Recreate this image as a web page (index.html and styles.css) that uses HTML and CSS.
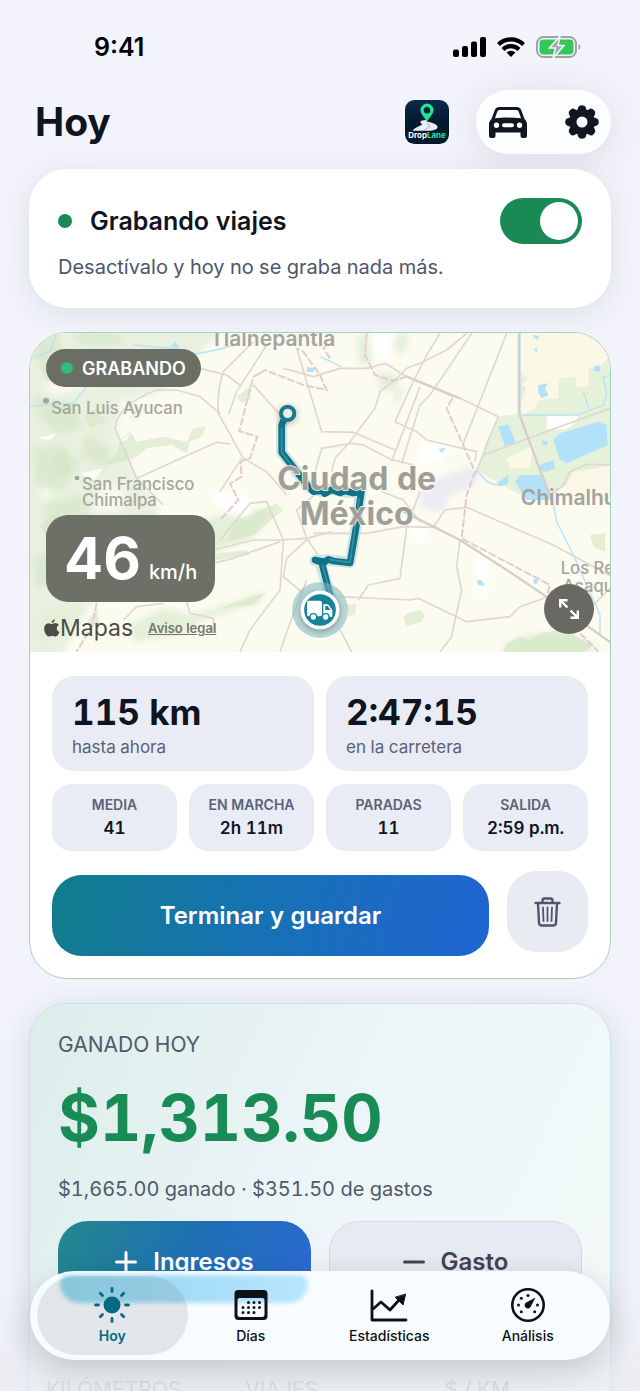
FILE: index.html
```html
<!DOCTYPE html>
<html lang="es">
<head>
<meta charset="utf-8">
<meta name="viewport" content="width=device-width, initial-scale=1">
<title>DropLane – Hoy</title>
<link rel="stylesheet" href="styles.css">
</head>
<body>
<div class="app">
  <div class="status">
    <span class="status-time">9:41</span>
    <span class="status-icons">
      <svg width="33" height="20" viewBox="0 0 33 20" fill="#000" aria-hidden="true"><rect x="0" y="12.500" width="6" height="7.500" rx="2"/><rect x="9" y="9" width="6" height="11" rx="2"/><rect x="18" y="4.500" width="6" height="15.500" rx="2"/><rect x="27" y="0" width="6" height="20" rx="2"/></svg>
      <svg width="28" height="20" viewBox="0 0 28 20" aria-hidden="true"><g fill="none" stroke="#000" stroke-width="4.200"><path d="M1.500 7.600a17.700 17.700 0 0 1 25 0"/><path d="M6 12.400a11.300 11.300 0 0 1 16 0"/></g><path d="M9.600 15.600a6.400 6.400 0 0 1 8.800 0L14 20z"/></svg>
      <svg width="45" height="22" viewBox="0 0 45 22" aria-hidden="true"><rect x="1" y="1" width="39" height="20" rx="6.500" fill="none" stroke="#a0a3a6" stroke-width="2"/><rect x="3.500" y="3.500" width="34" height="15" rx="4" fill="#34c759"/><path d="M42.500 8v6q2-1 2-3t-2-3z" fill="#a0a3a6"/><path d="M24 0 13.500 12h6L17 22 28 9.500h-6z" fill="#a4a9ac" stroke="#f3f3fb" stroke-width="1.600"/></svg>
    </span>
  </div>

  <header class="header">
    <h1 class="title">Hoy</h1>
    <svg class="logo" viewBox="0 0 44 44" role="img" aria-label="DropLane">
      <defs><linearGradient id="lg" x1="0" y1="0" x2="0" y2="1"><stop offset="0" stop-color="#0b2b4b"/><stop offset=".5" stop-color="#041a30"/><stop offset="1" stop-color="#03192b"/></linearGradient></defs>
      <rect width="44" height="44" rx="9.500" fill="url(#lg)"/>
      <path d="M22 21.500C18 15.500 15.500 13.500 15.500 10a6.500 6.500 0 0 1 13 0c0 3.500-2.500 5.500-6.500 11.500z" fill="#1fe29b"/>
      <circle cx="22" cy="10.300" r="3.200" fill="#07223a"/>
      <path d="M17 20.500l4-.5c1 1.500 1.500 2 3 2 6 1.500 9 3.500 8.500 5.500-.6 2.200-4.500 3-9 3.300H7.500c1.500-2.500 5-4 8.500-5.500 1.500-.7 1-1.300 0-2-1-1-1-2 1-2.800z" fill="#e9edf4"/>
      <path d="M21.500 23l3 2-1 2.600-6 3.400" fill="none" stroke="#9ba8ba" stroke-width=".8"/>
      <text x="22" y="38" text-anchor="middle" class="logo-text" fill="#fff">Drop<tspan fill="#1fe2a5">Lane</tspan></text>
    </svg>
    <div class="header-pill">
      <button class="icon-btn" type="button" aria-label="Vehículo">
        <svg width="38" height="31" viewBox="0 0 38 31" aria-hidden="true"><path fill="#111620" fill-rule="evenodd" d="M10.500 0h17c2.300 0 4 1 4.800 3.200L35.500 12c1.700 1.500 2.500 3 2.500 5.500v11.500a2 2 0 0 1-2 2h-2.500a2 2 0 0 1-2-2v-3.500h-25V29a2 2 0 0 1-2 2H2a2 2 0 0 1-2-2V17.500C0 15 .8 13.500 2.500 12l3.200-8.800C6.500 1 8.200 0 10.500 0zm.5 2.900c-1.300 0-2.200.6-2.700 1.800L5.900 11.300c8-1 18-1 26.200 0L29.700 4.700c-.5-1.200-1.400-1.800-2.700-1.800zM7.500 15.500a2.700 2.700 0 1 0 0 5.400 2.700 2.700 0 0 0 0-5.400zm23 0a2.700 2.700 0 1 0 0 5.400 2.700 2.700 0 0 0 0-5.400zM15 16.300a2 2 0 0 0 0 4h8a2 2 0 0 0 0-4z"/></svg>
      </button>
      <button class="icon-btn" type="button" aria-label="Ajustes">
        <svg width="34" height="34" viewBox="-17 -17 34 34" aria-hidden="true"><g fill="#111620"><g id="teeth"><path id="t" d="M-5-10.500-3.600-15Q-3-16.800 0-16.800T3.600-15L5-10.500z"/><use href="#t" transform="rotate(45)"/><use href="#t" transform="rotate(90)"/><use href="#t" transform="rotate(135)"/></g><use href="#teeth" transform="rotate(180)"/></g><circle r="9.200" fill="none" stroke="#111620" stroke-width="7.400"/></svg>
      </button>
    </div>
  </header>

  <main class="content">
    <section class="card record">
      <div class="record-row">
        <span class="record-dot"></span>
        <label class="record-label" for="rec">Grabando viajes</label>
        <input class="switch" id="rec" type="checkbox" role="switch" checked>
      </div>
      <p class="record-note">Desactívalo y hoy no se graba nada más.</p>
    </section>

    <section class="card trip">
      <div class="map">
        <svg class="map-art" viewBox="30 24 1740 957" preserveAspectRatio="xMidYMid slice" role="img" aria-label="Mapa de Ciudad de México con la ruta">
          <defs>
            <filter id="soft" x="-10%" y="-10%" width="120%" height="120%"><feGaussianBlur stdDeviation="10"/></filter>
            <filter id="shade" x="-50%" y="-50%" width="200%" height="200%"><feGaussianBlur stdDeviation="9"/></filter>
          </defs>
          <rect x="0" y="0" width="1800" height="1000" fill="#fcfbf0"/>
          <g filter="url(#soft)">
            <path fill="#e8f1df" d="M0 0H640L560 60 500 130 420 200 300 230 290 320 350 460 420 560 300 700 210 840 120 1000H0z"/>
            <path fill="#dae9cf" d="M30 40 110 20 130 90 60 130zM40 210 160 240 190 300 120 330 60 280zM40 370 130 360 180 420 120 500 50 480zM160 20 320 30 290 60 180 60zM70 540 190 510 210 600 100 640zM40 700 140 650 120 760 50 790zM230 100 300 130 260 180zM200 330 270 370 260 430 180 390z"/>
            <path fill="#fbf8ee" d="M60 180 150 160 210 180 110 215zM150 130 220 150 180 190zM250 470 320 490 300 560 220 560zM60 490 110 500 70 530zM170 620 220 600 230 680z"/>
            <path fill="#e4efd8" d="M370 700 440 620 500 600 640 560 760 550 700 640 560 690 420 740zM330 900 430 850 520 870 730 800 720 830 560 880 480 930 340 950zM330 240 380 250 340 290zM50 870 170 840 140 920 60 960zM1010 40 1040 20 1060 110 1020 120zM1100 30 1170 25 1150 90 1110 70zM1070 140 1130 150 1140 190 1080 200zM1120 200 1150 190 1130 250zM1450 960 1520 930 1640 920 1730 960 1700 990 1450 990z"/>
            <path fill="#ebebf2" d="M1230 470 1340 430 1390 440 1350 490 1250 520zM1190 500 1290 500 1270 560 1210 550z"/>
            <path fill="#fff" d="M1060 30 1130 20 1110 110 1060 100zM1200 350 1290 360 1270 410 1200 420zM560 500 680 510 700 590 620 560zM1370 680 1400 660 1400 820 1370 810zM1160 600 1220 610 1200 660z"/>
          </g>
          <g fill="#d4e7c3" opacity=".6">
            <path d="M300 345 330 320 350 350 430 335 500 350 520 310 558 305 545 335 510 350 500 385 455 360 380 370 350 395 310 410 255 420 290 385z"/>
            <path d="M650 215 695 180 690 225 665 235zM650 585 770 535 790 555 700 630 620 650zM550 690 680 675 690 690 560 710zM600 850 740 800 700 840z"/>
            <path d="M1150 880 1160 865 1200 855 1215 870 1205 890 1160 903zM980 840 1008 835 1005 870 985 872zM1710 630 1755 625 1755 680 1720 665z"/>
            <path d="M60 130 90 100 120 150 80 170zM190 270 230 250 260 290 210 310zM100 400 140 380 150 440 110 450zM60 600 110 560 130 610 80 640zM200 890 230 850 240 910zM120 700 150 660 160 720z"/>
            <path d="M1460 955 1500 935 1530 945 1560 925 1620 915 1680 940 1720 960 1690 981 1450 981z"/>
          </g>
          <path fill="#fffef9" d="M50 340 110 325 90 345zM180 445 250 430 220 465zM300 350 330 325 320 345z"/>
          <g fill="#e6f1da">
            <path d="M1435 275 1500 265 1500 140 1525 160 1505 180 1770 270V420L1690 440 1600 510H1500L1395 450 1370 430 1400 350z"/>
            <path d="M1615 160 1670 155 1670 180 1705 185 1705 130 1730 130 1775 90V290L1510 270 1545 250 1555 225 1615 220z"/>
          </g>
          <path fill="#fcf8e8" d="M1500 24H1690L1770 80 1730 130 1705 130V185H1670V155H1615V220L1555 225 1545 250 1510 270 1500 250 1525 160 1500 140zM1460 400 1540 360 1530 430 1470 430zM1660 440 1770 425V520H1620z"/>
          <path fill="#fff" d="M1580 272 1670 270 1672 285 1640 313H1580z"/>
          <g fill="#b3e1fa">
            <path d="M1600 345 1620 325 1735 290 1760 300 1763 360 1640 415 1620 405zM1435 305 1465 298 1487 350 1455 365zM1555 180 1585 175 1575 190 1585 210 1565 220 1555 205zM1485 470 1500 450 1560 450 1590 500 1600 525H1520zM1565 345 1585 350 1580 362 1565 358zM1560 420 1600 405 1605 430 1580 440 1560 435zM1430 475 1465 450 1465 475 1440 485zM1720 125 1740 120 1740 140 1722 138zM1540 30 1555 32 1555 45 1540 38zM1540 72 1553 70 1550 82zM1256 372 1278 368 1265 385zM1370 765 1385 765 1395 782 1375 780zM1540 765 1555 755 1550 778 1540 775zM450 65 480 70 465 50zM860 125 885 130 880 142 860 140z"/>
          </g>
          <g fill="none" stroke="#b6e2f6" stroke-width="4">
            <path d="M30 100 90 80 110 25M30 245 70 240 160 235 200 185 250 150M340 60 470 72 500 90Q560 85 640 60M1500 25V270L1670 270 1750 240 1760 210 1750 155 1775 150M1690 200 1707 250M1370 430Q1395 480 1440 480M1596 520 1610 590 1660 690 1740 870V930M900 95 965 125"/>
          </g>
          <g fill="none" stroke="#ddd8d2" stroke-width="5" stroke-linejoin="round">
            <path d="M700 50 610 140Q590 200 595 265L670 400 740 440 800 510M740 60 650 200 625 270M830 70 905 320 1000 322 1125 375M700 180 790 280M540 130 620 150 660 180M350 460 590 352 632 357M410 195H470L540 215 600 265M410 195Q290 240 285 310L350 460 430 540"/>
            <path d="M790 130 880 155 960 130 1040 130 1095 115 1160 155 1245 190 1320 220 1435 275 1405 345 1390 390 1365 450M1355 25 1230 210 1200 240 1145 415M1340 25 1280 75 1200 115 1160 130 1125 165 1080 200 1065 250 990 350 945 400 935 440M1260 25 1220 90 1170 190 1125 290 1190 320 1220 345 1370 380 1365 410M1200 185 1115 410M1460 25 1330 355M1770 250 1390 390M885 440 905 370 990 355 1030 360 1110 402 1180 420M1775 420 1700 418 1650 440 1630 480 1590 510"/>
            <path d="M880 625H1040L1150 605 1240 607 1275 555 1340 547 1600 660 1775 755M1160 605 1140 760 1045 780 1015 825M960 815 1170 825 1195 820 1340 890 1470 875 1500 845 1580 817 1660 875M1320 645 1310 725 1325 795 1305 885 1295 935 1260 980M1085 500 1150 525 1200 590M960 915 1000 990M1160 605 1200 500M1775 785 1720 840"/>
            <path d="M580 675 700 645H780L860 640 935 620M580 715 640 700 780 650M600 645 690 535 740 530 790 645 780 795 690 915 660 980M865 640 800 700 790 755 850 805M860 640 830 555 900 495M500 830 510 865 580 880V925M310 885 350 845 430 835M860 765 810 895 780 980M665 400 600 500M862 642 900 700"/>
          </g>
          <g fill="none" stroke="#d5cec9" stroke-width="7" stroke-linejoin="round">
            <path d="M1497 25V265L1560 435 1590 510M1150 560 1240 605 1320 645 1445 725 1580 815 1775 955M1160 155 1320 220"/>
          </g>
          <g fill="none" stroke="#e6cad2" stroke-width="6" stroke-dasharray="24 6">
            <path d="M720 145 735 135 850 180 920 195 900 150 850 80 830 70M720 145 700 155 658 318 712 335 690 400 662 410 665 455 630 475 655 525 600 585M930 100 910 70 920 60M1040 25 1035 90 1065 150 1120 168 1160 155 1245 190 1300 215 1280 250 1365 440 1340 510 1325 640 1590 780 1580 815M1680 925 1735 980M230 835 215 905 170 980"/>
          </g>

          <g fill="none" stroke-linejoin="round" stroke-linecap="round">
            <path stroke="#c5dfe2" stroke-width="34" opacity=".8" d="M800 265 785 300V382L830 440 865 485 905 500 935 492 980 502 1022 500 1008 610 990 712 925 705 885 706 900 710 935 830"/>
            <path stroke="#0f7286" stroke-width="20" d="M800 265 785 300V382L830 440 865 485 880 500 905 497 915 506 935 494 960 504 975 498 1000 504 1024 500 1008 610 990 714 940 708 925 703 915 710 885 705 905 712 935 830"/>
            <path stroke="#3292a3" stroke-width="5" d="M785 310V382L830 440M1018 520 990 712 930 704M908 722 935 820"/>
          </g>
          <g class="map-city" text-anchor="middle"><text x="1010" y="494">Ciudad de</text><text x="1010" y="600">México</text></g>
          <circle cx="803" cy="270" r="30" fill="#555" opacity=".3" filter="url(#shade)"/>
          <circle cx="803" cy="265" r="20" fill="#ededea" stroke="#187a8c" stroke-width="12"/>
          <circle cx="900" cy="855" r="84" fill="#81b8c2" opacity=".55"/>
          <circle cx="900" cy="860" r="58" fill="#444" opacity=".5" filter="url(#shade)"/>
          <circle cx="900" cy="855" r="53" fill="#148297" stroke="#fff" stroke-width="11"/>
          <g fill="#fff"><rect x="861" y="827" width="45" height="47" rx="6"/><path d="M910 838H924L937 855V875H910z"/></g>
          <path d="M916 843H923L931 855H916z" fill="#148297"/>
          <g fill="#fff" stroke="#148297" stroke-width="4"><circle cx="880" cy="876" r="10"/><circle cx="917" cy="876" r="10"/></g>

          <g class="map-town" text-anchor="middle"><text x="758" y="63">Tlalnepantla</text></g>
          <g class="map-town"><text x="1502" y="541">Chimalhuacán</text></g>
          <g class="map-place">
            <circle cx="78" cy="227" r="9"/><circle cx="171" cy="459" r="7"/>
            <text x="94" y="268">San Luis Ayucan</text>
            <text x="186" y="494">San Francisco</text><text x="186" y="544">Chimalpa</text>
            <text x="1622" y="746">Los Reyes</text><text x="1628" y="801">Acaquilpan</text>
          </g>
        </svg>
        <span class="rec-badge"><span class="rec-badge-dot"></span>GRABANDO</span>
        <div class="speed"><strong class="speed-value">46</strong><span class="speed-unit">km/h</span></div>
        <div class="map-credit">
          <span class="map-brand"><svg width="16" height="18" viewBox="0 0 16 18" fill="#4b4c47" aria-hidden="true"><path d="M10.800.2c.1 2-1.500 3.700-3.200 3.700C7.400 2 9 .4 10.800.2zM8 5c.8 0 1.700-.9 3.300-.9 1.400 0 2.700.7 3.500 1.900-3 1.800-2.500 5.900.7 7-.8 2-2 4.500-3.900 4.500-1.300 0-1.700-.8-3.300-.8s-2 .8-3.300.8C2.600 17.500.2 13.500.2 9.800.2 6.300 2.400 4.200 4.700 4.200 6.200 4.200 7.200 5 8 5z"/></svg>Mapas</span>
          <a class="map-legal" href="#legal">Aviso legal</a>
        </div>
        <button class="expand" type="button" aria-label="Ampliar mapa">
          <svg width="20" height="20" viewBox="0 0 20 20" fill="none" stroke="#fff" stroke-width="2.400" aria-hidden="true"><path d="M1.200 8.500V1.200h7.300M1.500 1.500l7 7M18.800 11.500v7.300h-7.300M18.500 18.500l-7-7"/></svg>
        </button>
      </div>

      <div class="trip-body">
        <div class="tiles tiles-2">
          <div class="tile-big"><strong class="tile-figure">115 km</strong><span class="tile-caption">hasta ahora</span></div>
          <div class="tile-big"><strong class="tile-figure">2:47:15</strong><span class="tile-caption">en la carretera</span></div>
        </div>
        <div class="tiles tiles-4">
          <div class="tile"><span class="tile-name">MEDIA</span><strong class="tile-value">41</strong></div>
          <div class="tile"><span class="tile-name">EN MARCHA</span><strong class="tile-value">2h 11m</strong></div>
          <div class="tile"><span class="tile-name">PARADAS</span><strong class="tile-value">11</strong></div>
          <div class="tile"><span class="tile-name">SALIDA</span><strong class="tile-value">2:59 p.m.</strong></div>
        </div>
        <div class="actions">
          <button class="btn btn-finish" type="button">Terminar y guardar</button>
          <button class="btn-trash" type="button" aria-label="Descartar">
            <svg width="27" height="30" viewBox="0 0 27 30" fill="none" stroke="#4d566a" stroke-width="2.400" stroke-linecap="round" stroke-linejoin="round" aria-hidden="true"><path d="M1.500 6h24M8.500 5.500V3.300Q8.500 1.500 10.500 1.500h6q2 0 2 1.800v2.200M4 6.500l1 19.300Q5.200 28.500 8 28.500h11q2.800 0 3-2.700l1-19.300"/><path stroke-width="1.800" d="M9 10.500l.5 13.500M13.500 10.500V24M18 10.500 17.500 24"/></svg>
          </button>
        </div>
      </div>
    </section>

    <section class="card earned">
      <h2 class="earned-title">GANADO HOY</h2>
      <strong class="earned-total">$1,313.50</strong>
      <p class="earned-note">$1,665.00 ganado · $351.50 de gastos</p>
      <div class="earned-actions">
        <button class="btn btn-income" type="button"><svg width="22" height="22" viewBox="0 0 22 22" stroke="#fff" stroke-width="3" stroke-linecap="round" aria-hidden="true"><path d="M1.500 11h19M11 1.500v19"/></svg>Ingresos</button>
        <button class="btn btn-expense" type="button"><svg width="22" height="22" viewBox="0 0 22 22" stroke="#414450" stroke-width="3" stroke-linecap="round" aria-hidden="true"><path d="M1.500 11h19"/></svg>Gasto</button>
      </div>
      <div class="totals"><span>KILÓMETROS</span><span>VIAJES</span><span>$ / KM</span></div>
    </section>
  </main>

  <nav class="tabbar" aria-label="Principal">
    <span class="tabbar-glow"></span>
    <a class="tab tab-active" href="#hoy" aria-current="page">
      <svg width="36" height="36" viewBox="-18 -18 36 36" aria-hidden="true"><circle r="8.500" fill="#036a84"/><path d="M0-16.500v3M0 13.500v3M-16.500 0h3M13.500 0h3M-11.700-11.700l2.200 2.200M9.500 9.500l2.200 2.200M-11.700 11.700l2.200-2.200M9.500-9.500l2.200-2.200" stroke="#036a84" stroke-width="2.800" stroke-linecap="round"/></svg>
      <span class="tab-label">Hoy</span>
    </a>
    <a class="tab" href="#dias">
      <svg width="36" height="36" viewBox="0 0 36 36" aria-hidden="true"><path fill="#0d1216" fill-rule="evenodd" d="M5 3h26q3.500 0 3.500 4v22q0 4-4 4H5.500q-4 0-4-4V7q0-4 3.500-4zM4.500 13v14.500q0 2.500 2.500 2.500h22q2.500 0 2.500-2.500V13q0-2-2-2h-23q-2 0-2 2z"/><path d="M15.500 15.500h12M10 20.500h18M10 25.500h12" stroke="#0d1216" stroke-width="3" stroke-linecap="round" stroke-dasharray="0 5.500"/></svg>
      <span class="tab-label">Días</span>
    </a>
    <a class="tab" href="#estadisticas">
      <svg width="38" height="36" viewBox="0 0 38 36" fill="none" stroke="#0d1216" stroke-width="2.800" stroke-linecap="round" stroke-linejoin="round" aria-hidden="true"><path d="M2 4v29h34M3 22l8-7 9 8 9-10"/><path d="M35.500 7.500 33 18l-7.500-7.500z" fill="#0d1216" stroke-width="1"/></svg>
      <span class="tab-label">Estadísticas</span>
    </a>
    <a class="tab" href="#analisis">
      <svg width="36" height="36" viewBox="-18 -18 36 36" aria-hidden="true"><circle r="15.700" fill="none" stroke="#0d1216" stroke-width="2.600"/><g fill="#0d1216"><circle cx="-9.500" r="1.500"/><circle cx="9.500" r="1.500"/><circle cy="-9.500" r="1.500"/><circle cx="-6.700" cy="-6.700" r="1.500"/><circle cx="-6.700" cy="6.700" r="1.500"/><circle cx="6.700" cy="6.700" r="1.500"/><path d="M7.500-7.500 2.700 1.700A3.200 3.200 0 1 1-2.200-2.200z"/></g></svg>
      <span class="tab-label">Análisis</span>
    </a>
  </nav>
</div>
</body>
</html>
```
FILE: styles.css
```css
* { box-sizing: border-box; }

body {
  margin: 0;
  background: #f2f3fb;
  color: #0f1420;
  font-family: Inter, "Liberation Sans", sans-serif;
  font-variant-numeric: tabular-nums;
}

h1, h2, p { margin: 0; }
button { border: 0; padding: 0; font: inherit; cursor: pointer; }
svg { display: block; flex: none; }

.app {
  position: relative;
  height: 100vh;
  overflow: hidden;
}

/* Status bar */
.status {
  display: flex;
  justify-content: space-between;
  align-items: center;
  padding: 32px 59px 0 94px;
  height: 62px;
  font-variant-numeric: normal;
}
.status-time { font-size: 25px; font-weight: 600; line-height: 30px; color: #000; }
.status-icons { display: flex; align-items: center; gap: 11px; }

/* Header */
.header {
  display: flex;
  align-items: center;
  padding: 28px 29px 15px 35px;
}
.title { flex: 1; font-size: 39px; line-height: 48px; font-weight: 700; }
.logo { width: 44px; height: 44px; margin-right: 27px; }
.logo-text { font-size: 8px; font-weight: 700; }
.header-pill {
  display: flex;
  justify-content: space-between;
  padding: 0 10px;
  width: 135px;
  height: 64px;
  border-radius: 32px;
  background: #fbfdff;
  box-shadow: 0 6px 40px rgba(20, 22, 20, .1);
}
.icon-btn {
  display: grid;
  place-items: center;
  width: 44px;
  background: none;
}
.icon-btn:last-child { width: 38px; }

/* Cards */
.content {
  display: flex;
  flex-direction: column;
  gap: 24px;
  padding: 0 29px;
}
.card {
  border-radius: 38px;
  background: #fff;
}
.record {
  padding: 29px 29px 27px;
  box-shadow: 0 6px 32px rgba(20, 28, 20, .09);
}
.record-row { display: flex; align-items: center; }
.record-dot {
  width: 14px;
  height: 14px;
  margin-right: 18px;
  border-radius: 50%;
  background: #1a8a55;
}
.record-label { flex: 1; font-size: 25px; line-height: 32px; font-weight: 600; }
.record-note { margin-top: 9px; font-size: 20px; line-height: 28px; color: #4d566d; }
.switch {
  appearance: none;
  width: 82px;
  height: 46px;
  margin: 0;
  padding: 4px;
  border-radius: 23px;
  background: #b9bdc6;
}
.switch::before {
  content: "";
  display: block;
  width: 38px;
  height: 38px;
  border-radius: 50%;
  background: #fff;
}
.switch:checked { background: #1a8a55; }
.switch:checked::before { margin-left: auto; }

/* Current trip */
.trip { overflow: hidden; border: 1px solid #a2d4bd; }
.map { position: relative; }
.map-art { width: 100%; height: auto; }
.map-city { font-size: 96px; font-weight: 700; fill: #a09e99; stroke: #fcfbf0; stroke-width: 4px; paint-order: stroke; }
.map-town { font-size: 63px; font-weight: 600; fill: #a5a39d; }
.map-place { font-size: 50px; font-weight: 500; fill: #a4a69c; }

.rec-badge {
  position: absolute;
  top: 16px;
  left: 16px;
  display: flex;
  align-items: center;
  gap: 9px;
  padding: 0 15px;
  height: 38px;
  border-radius: 19px;
  background: #6b6e65;
  color: #fff;
  font-size: 18px;
  font-weight: 600;
}
.rec-badge-dot { width: 12px; height: 12px; border-radius: 50%; background: #2fbd78; }
.speed {
  position: absolute;
  bottom: 50px;
  left: 16px;
  display: flex;
  align-items: baseline;
  gap: 8px;
  padding: 7px 18px;
  height: 87px;
  border-radius: 22px;
  background: #6d7067;
  color: #fff;
}
.speed-value { font-size: 58px; line-height: 73px; font-weight: 700; font-variant-numeric: normal; }
.speed-unit { font-size: 20px; font-weight: 500; }
.map-credit {
  position: absolute;
  bottom: 10px;
  left: 14px;
  display: flex;
  align-items: center;
  gap: 15px;
}
.map-brand { display: flex; align-items: center; font-size: 23px; line-height: 28px; color: #4b4c47; }
.map-legal { font-size: 13px; line-height: 20px; font-weight: 600; color: #74766e; }
.expand {
  position: absolute;
  right: 16px;
  bottom: 18px;
  display: grid;
  place-items: center;
  width: 50px;
  height: 50px;
  border-radius: 50%;
  background: #696863;
}

.trip-body { padding: 24px 22px 22px; }
.tiles { display: grid; gap: 12px; }
.tiles-2 { grid-template-columns: repeat(2, 1fr); }
.tiles-4 { grid-template-columns: repeat(4, 1fr); margin-top: 13px; }
.tile-big {
  display: flex;
  flex-direction: column;
  padding: 15px 20px 12px;
  border-radius: 22px;
  background: #e9ebf5;
}
.tile-figure { font-size: 35px; line-height: 42px; font-weight: 700; }
.tile-caption { margin-top: 2px; font-size: 17px; line-height: 24px; color: #5a6277; }
.tile {
  display: flex;
  flex-direction: column;
  align-items: center;
  padding: 10px 0;
  border-radius: 20px;
  background: #e9ebf5;
  white-space: nowrap;
}
.tile-name { font-size: 14px; line-height: 22px; font-weight: 600; color: #5a6277; }
.tile-value { font-size: 17px; line-height: 25px; font-weight: 600; }

.actions {
  display: flex;
  gap: 18px;
  min-height: 85px;
  margin-top: 20px;
}
.btn {
  display: flex;
  align-items: center;
  justify-content: center;
  height: 81px;
  border-radius: 30px;
  font-size: 24px;
  font-weight: 600;
}
.btn-finish {
  flex: 1;
  align-self: flex-end;
  background: linear-gradient(105deg, #117d8b, #1672b2 45%, #2064d2);
  color: #fff;
}
.btn-trash {
  display: grid;
  place-items: center;
  width: 81px;
  height: 81px;
  border-radius: 30px;
  background: #e9ebf3;
}

/* Earnings */
.earned {
  padding: 27px 28px 40px;
  border: 1px solid #c8e2e2;
  background: linear-gradient(115deg, #dcedea, #edf5f8 50%, #f3faf8);
  box-shadow: 0 6px 30px rgba(30, 90, 120, .16);
}
.earned-title { font-size: 21px; line-height: 28px; font-weight: 400; color: #4f5a6b; }
.earned-total { display: block; margin-top: 20px; font-size: 64px; line-height: 78px; font-weight: 700; color: #198c55; }
.earned-note { margin-top: 18px; font-size: 20px; line-height: 28px; color: #4f5a6b; }
.earned-actions { display: grid; grid-template-columns: 1fr 1fr; gap: 18px; margin-top: 18px; }
.earned-actions .btn { gap: 16px; }
.btn-income { background: linear-gradient(115deg, #24888c, #1e70b4 50%, #2c69d4); color: #fff; }
.btn-expense { border: 1px solid #d6d9e1; background: #e8eaf3; color: #414450; }
.totals {
  display: grid;
  grid-template-columns: 4fr 4fr 3fr;
  margin: 74px -12px 0;
  font-size: 21px;
  line-height: 28px;
  color: #b4bac2;
}

/* Tab bar, floating above the scrolled content */
.app::after {
  content: "";
  position: absolute;
  inset: auto 0 0;
  height: 120px;
  background: linear-gradient(rgba(236, 238, 242, 0), rgba(234, 236, 240, .7) 80%);
}
.tabbar {
  position: absolute;
  z-index: 1;
  right: 30px;
  bottom: 31px;
  left: 30px;
  display: flex;
  padding: 5px 13px;
  height: 89px;
  border-radius: 45px;
  background: #f9fcff;
  box-shadow: 0 10px 30px rgba(20, 25, 25, .18);
}
.tabbar-glow {
  position: absolute;
  top: 4px;
  left: 30px;
  width: 248px;
  height: 28px;
  border-radius: 10px 10px 22px 22px;
  background: linear-gradient(90deg, #8fd8ee, #a3dcf6 50%, #b9e6fd);
  filter: blur(2px);
}
.tab {
  position: relative;
  flex: 1;
  display: flex;
  flex-direction: column;
  align-items: center;
  padding-top: 11px;
  color: #0d1216;
  font-size: 14px;
  line-height: 26px;
  font-weight: 500;
  text-decoration: none;
}
.tab svg, .tab-label { position: relative; }
.tab-active { color: #036a84; font-weight: 600; }
.tab-active::before {
  content: "";
  position: absolute;
  inset: 0 -6px;
  border-radius: 40px;
  background: rgba(90, 100, 115, .14);
}
```
